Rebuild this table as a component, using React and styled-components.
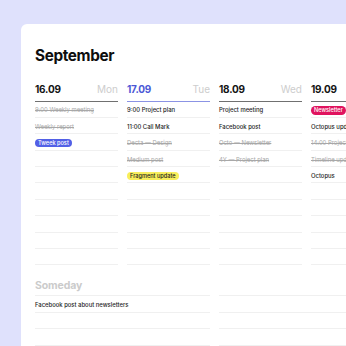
import React from "react";
import styled, { createGlobalStyle, css } from "styled-components";

const Global = createGlobalStyle`
  html, body { margin: 0; padding: 0; overflow: hidden; }
  body {
    background: #dfe1fc;
    font-family: Inter, "Liberation Sans", sans-serif;
    -webkit-font-smoothing: antialiased;
  }
  #root { width: 346px; height: 346px; overflow: hidden; }
`;

const Page = styled.div`
  width: 346px;
  height: 346px;
  box-sizing: border-box;
  padding: 24px 0 0 21px;
  overflow: hidden;
`;

const Card = styled.div`
  width: 420px;
  height: 400px;
  background: #ffffff;
  border-top-left-radius: 6px;
  box-sizing: border-box;
  padding: 23px 0 0 14px;
`;

const Title = styled.h1`
  margin: 0 0 17.5px 0;
  font-size: 15.3px;
  line-height: 18px;
  font-weight: 700;
  color: #0e0e0e;
  letter-spacing: -0.35px;
`;

const Week = styled.div`
  display: grid;
  grid-template-columns: repeat(4, 83px);
  column-gap: 9px;
`;

const Column = styled.div`
  display: flex;
  flex-direction: column;
`;

const Header = styled.div`
  display: flex;
  justify-content: space-between;
  align-items: flex-start;
  height: 19px;
  box-sizing: border-box;
  border-bottom: 1.4px solid ${(p) => (p.$today ? "#8b93e4" : "#707070")};
`;

const DateText = styled.span`
  font-size: 10px;
  line-height: 12px;
  font-weight: 700;
  letter-spacing: -0.2px;
  color: ${(p) => (p.$today ? "#4b58d6" : "#141414")};
`;

const DayName = styled.span`
  font-size: 10px;
  line-height: 12px;
  font-weight: 400;
  color: #cdcdcd;
`;

const Row = styled.div`
  height: 16.4px;
  box-sizing: border-box;
  border-bottom: 1px solid #f0f0f0;
  display: flex;
  align-items: center;
  padding-top: 2.5px;
  white-space: nowrap;
`;

const Item = styled.span`
  font-size: 5.9px;
  line-height: 8px;
  font-weight: 500;
  color: #1c1c1c;
  ${(p) =>
    p.$done &&
    css`
      color: #a8a8a8;
      font-weight: 400;
      text-decoration: line-through;
    `}
`;

const pillColors = {
  blue: { bg: "#5260e6", fg: "#ffffff" },
  yellow: { bg: "#f8ee5c", fg: "#1c1c1c" },
  pink: { bg: "#e0135e", fg: "#ffffff" },
};

const Pill = styled.span`
  display: inline-flex;
  align-items: center;
  height: 8.5px;
  padding: 0 3px;
  border-radius: 5px;
  font-size: 5.6px;
  font-weight: 500;
  background: ${(p) => pillColors[p.$tone].bg};
  color: ${(p) => pillColors[p.$tone].fg};
`;

const Someday = styled.div`
  margin-top: 14px;
`;

const SomedayTitle = styled.h2`
  margin: 0;
  height: 16px;
  font-size: 10.5px;
  line-height: 13px;
  font-weight: 700;
  color: #cbcbcb;
  letter-spacing: -0.1px;
`;

const SomedayGrid = styled.div`
  display: grid;
  grid-template-columns: repeat(2, 175px);
  column-gap: 9px;
`;

const SomedayList = styled.div`
  display: flex;
  flex-direction: column;
  border-top: 1px solid #f0f0f0;
`;

const days = [
  {
    date: "16.09",
    name: "Mon",
    items: [
      { t: "9:00 Weekly meeting", done: true },
      { t: "Weekly report", done: true },
      { t: "Tweek post", pill: "blue" },
    ],
  },
  {
    date: "17.09",
    name: "Tue",
    today: true,
    items: [
      { t: "9:00 Project plan" },
      { t: "11:00 Call Mark" },
      { t: "Decta — Design", done: true },
      { t: "Medium post", done: true },
      { t: "Fragment update", pill: "yellow" },
    ],
  },
  {
    date: "18.09",
    name: "Wed",
    items: [
      { t: "Project meeting" },
      { t: "Facebook post" },
      { t: "Octo — Newsletter", done: true },
      { t: "4Y — Project plan", done: true },
    ],
  },
  {
    date: "19.09",
    name: "Thu",
    items: [
      { t: "Newsletter", pill: "pink" },
      { t: "Octopus update" },
      { t: "14:00 Project call", done: true },
      { t: "Timeline update", done: true },
      { t: "Octopus" },
    ],
  },
];

const ROWS = 10;

function Cell({ item }) {
  if (!item) return <Row />;
  return (
    <Row>
      {item.pill ? (
        <Pill $tone={item.pill}>{item.t}</Pill>
      ) : (
        <Item $done={item.done}>{item.t}</Item>
      )}
    </Row>
  );
}

export default function App() {
  const someday = [["Facebook post about newsletters"], []];
  return (
    <>
      <Global />
      <Page>
        <Card>
          <Title>September</Title>
          <Week>
            {days.map((d) => (
              <Column key={d.date}>
                <Header $today={d.today}>
                  <DateText $today={d.today}>{d.date}</DateText>
                  <DayName>{d.name}</DayName>
                </Header>
                {Array.from({ length: ROWS }).map((_, i) => (
                  <Cell key={i} item={d.items[i]} />
                ))}
              </Column>
            ))}
          </Week>
          <Someday>
            <SomedayTitle>Someday</SomedayTitle>
            <SomedayGrid>
              {someday.map((list, li) => (
                <SomedayList key={li}>
                  {Array.from({ length: 4 }).map((_, i) => (
                    <Cell key={i} item={list[i] ? { t: list[i] } : null} />
                  ))}
                </SomedayList>
              ))}
            </SomedayGrid>
          </Someday>
        </Card>
      </Page>
    </>
  );
}
